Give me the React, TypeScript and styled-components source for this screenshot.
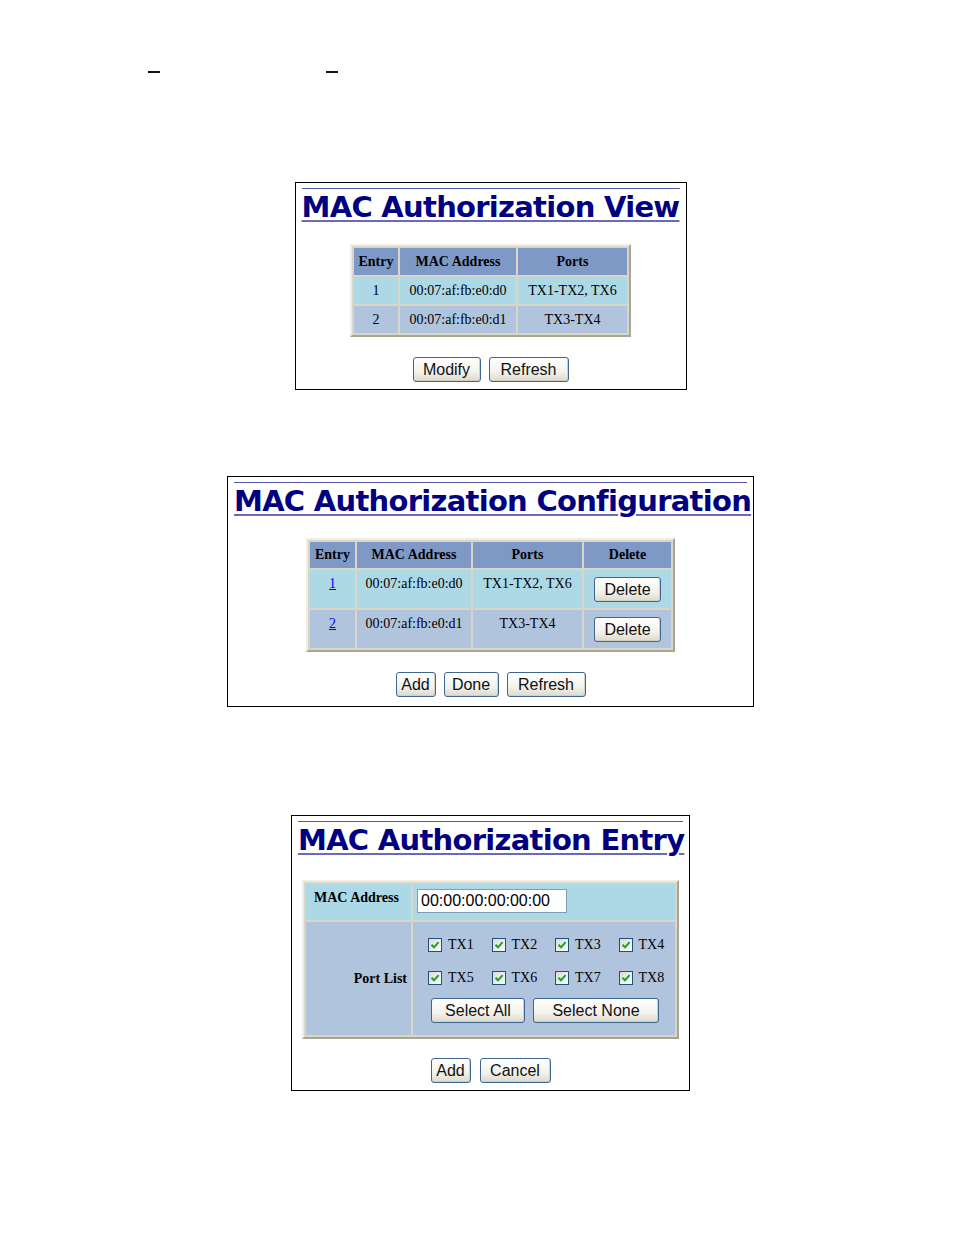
import React from "react";
import styled, { createGlobalStyle } from "styled-components";

const Global = createGlobalStyle`
  html, body { margin: 0; padding: 0; background: #fff; }
  body { font-family: "Liberation Serif", "Times New Roman", serif; color: #000; }
`;

const Page = styled.div`
  width: 954px;
  min-height: 1235px;
  box-sizing: border-box;
  padding: 71px 0 0 148px;
`;

const Column = styled.div`
  width: 685px;
  display: flex;
  flex-direction: column;
  align-items: center;
`;

const DashRow = styled.div`
  align-self: stretch;
  display: flex;
  height: 2px;
`;

const Dash = styled.span<{ $ml: number }>`
  display: block;
  width: 12px;
  height: 2px;
  background: #111;
  margin-left: ${(p) => p.$ml}px;
`;

const Panel = styled.section<{ $w: number; $mt: number; $pb: number }>`
  width: ${(p) => p.$w}px;
  margin-top: ${(p) => p.$mt}px;
  box-sizing: border-box;
  border: 1px solid #000;
  padding: 5px 6px ${(p) => p.$pb}px;
  display: flex;
  flex-direction: column;
  align-items: center;
`;

const Title = styled.h1`
  align-self: stretch;
  margin: 0;
  border-top: 1px solid #5656a8;
  font-family: "DejaVu Sans", Verdana, sans-serif;
  font-weight: bold;
  font-size: 29px;
  letter-spacing: -0.72px;
  line-height: 36px;
  height: 36px;
  color: #000080;
  text-align: center;
  white-space: nowrap;
  text-decoration: underline;
  text-decoration-color: #6a6ab8;
  text-decoration-thickness: 2px;
  text-underline-offset: 3px;
`;

const Grid = styled.table<{ $mt: number }>`
  margin-top: ${(p) => p.$mt}px;
  border-collapse: separate;
  border-spacing: 2px;
  background: #dad6c7;
  border: 2px solid;
  border-color: #efede4 #a9a596 #a9a596 #efede4;
  font-size: 14px;
  table-layout: fixed;
`;

const Col = styled.col<{ $w: number }>`
  width: ${(p) => p.$w}px;
`;

const Head = styled.th<{ $h: number }>`
  background: #7f99c7;
  height: ${(p) => p.$h}px;
  padding: 0;
  font-weight: bold;
  text-align: center;
  vertical-align: middle;
  white-space: nowrap;
`;

const Cell = styled.td<{ $h: number; $bg: string; $top?: boolean }>`
  background: ${(p) => p.$bg};
  height: ${(p) => p.$h}px;
  padding: ${(p) => (p.$top ? "6px 0 0" : "0")};
  box-sizing: border-box;
  text-align: center;
  vertical-align: ${(p) => (p.$top ? "top" : "middle")};
  white-space: nowrap;
`;

const EntryLink = styled.a`
  color: #0000ee;
  text-decoration: underline;
`;

const ButtonRow = styled.div<{ $mt: number; $gap: number }>`
  display: flex;
  gap: ${(p) => p.$gap}px;
  margin-top: ${(p) => p.$mt}px;
  justify-content: center;
`;

const Btn = styled.button<{ $w: number }>`
  width: ${(p) => p.$w}px;
  height: 25px;
  box-sizing: border-box;
  padding: 0;
  border: 1px solid #3f6690;
  border-radius: 3px;
  background: linear-gradient(#ffffff, #f3f2ec 60%, #dcd9cc);
  box-shadow: inset -1px -1px 0 #d3d0c2;
  font-family: "Liberation Sans", Arial, sans-serif;
  font-size: 16px;
  color: #111;
  line-height: 23px;
  cursor: pointer;
`;

const Label = styled.td<{ $h: number; $align: "left" | "right"; $valign: "top" | "middle" }>`
  background: ${(p) => (p.$valign === "top" ? "#add8e6" : "#b0c4de")};
  height: ${(p) => p.$h}px;
  box-sizing: border-box;
  padding: ${(p) => (p.$valign === "top" ? "6px 0 0 8px" : "0 4px 0 0")};
  font-weight: bold;
  text-align: ${(p) => p.$align};
  vertical-align: ${(p) => p.$valign};
  white-space: nowrap;
`;

const Field = styled.td<{ $bg: string; $pad: string }>`
  background: ${(p) => p.$bg};
  padding: ${(p) => p.$pad};
  box-sizing: border-box;
  vertical-align: top;
`;

const TextInput = styled.input`
  width: 150px;
  height: 24px;
  box-sizing: border-box;
  border: 1px solid #7f9db9;
  padding: 0 3px;
  font-family: "Liberation Sans", Arial, sans-serif;
  font-size: 16px;
  color: #000;
  background: #fff;
  outline: none;
`;

const PortGrid = styled.div`
  display: grid;
  grid-template-columns: 63.5px 63.5px 63.5px auto;
  grid-auto-rows: 33px;
`;

const Port = styled.label`
  display: flex;
  align-items: center;
  gap: 6px;
  font-size: 14px;
`;

const Box = styled.span`
  width: 14px;
  height: 14px;
  box-sizing: border-box;
  border: 1px solid #1c5180;
  background: linear-gradient(135deg, #dcdcd7, #fbfbf9);
  display: flex;
  align-items: center;
  justify-content: center;
`;

const SelectRow = styled.div`
  display: flex;
  gap: 8px;
  margin: 4px 0 0 3px;
`;

const Check = () => (
  <Box>
    <svg width="10" height="10" viewBox="0 0 10 10">
      <path d="M1.5 4.8 L4 7.3 L8.6 2.2" fill="none" stroke="#21a121" strokeWidth="2" />
    </svg>
  </Box>
);

const viewRows = [
  { n: "1", mac: "00:07:af:fb:e0:d0", ports: "TX1-TX2, TX6", bg: "#add8e6" },
  { n: "2", mac: "00:07:af:fb:e0:d1", ports: "TX3-TX4", bg: "#b0c4de" },
];

const ports = ["TX1", "TX2", "TX3", "TX4", "TX5", "TX6", "TX7", "TX8"];

export default function App() {
  return (
    <>
      <Global />
      <Page>
        <Column>
          <DashRow>
            <Dash $ml={0} />
            <Dash $ml={166} />
          </DashRow>

          <Panel $w={392} $mt={109} $pb={7}>
            <Title>MAC Authorization View</Title>
            <Grid $mt={19}>
              <colgroup>
                <Col $w={44} />
                <Col $w={116} />
                <Col $w={109} />
              </colgroup>
              <thead>
                <tr>
                  <Head $h={27}>Entry</Head>
                  <Head $h={27}>MAC Address</Head>
                  <Head $h={27}>Ports</Head>
                </tr>
              </thead>
              <tbody>
                {viewRows.map((r) => (
                  <tr key={r.n}>
                    <Cell $h={27} $bg={r.bg}>{r.n}</Cell>
                    <Cell $h={27} $bg={r.bg}>{r.mac}</Cell>
                    <Cell $h={27} $bg={r.bg}>{r.ports}</Cell>
                  </tr>
                ))}
              </tbody>
            </Grid>
            <ButtonRow $mt={20} $gap={8}>
              <Btn $w={68}>Modify</Btn>
              <Btn $w={80}>Refresh</Btn>
            </ButtonRow>
          </Panel>

          <Panel $w={527} $mt={86} $pb={9}>
            <Title>MAC Authorization Configuration</Title>
            <Grid $mt={19}>
              <colgroup>
                <Col $w={45} />
                <Col $w={114} />
                <Col $w={109} />
                <Col $w={87} />
              </colgroup>
              <thead>
                <tr>
                  <Head $h={26}>Entry</Head>
                  <Head $h={26}>MAC Address</Head>
                  <Head $h={26}>Ports</Head>
                  <Head $h={26}>Delete</Head>
                </tr>
              </thead>
              <tbody>
                {viewRows.map((r) => (
                  <tr key={r.n}>
                    <Cell $h={38} $bg={r.bg} $top>
                      <EntryLink href="#">{r.n}</EntryLink>
                    </Cell>
                    <Cell $h={38} $bg={r.bg} $top>{r.mac}</Cell>
                    <Cell $h={38} $bg={r.bg} $top>{r.ports}</Cell>
                    <Cell $h={38} $bg={r.bg}>
                      <Btn $w={67}>Delete</Btn>
                    </Cell>
                  </tr>
                ))}
              </tbody>
            </Grid>
            <ButtonRow $mt={20} $gap={8}>
              <Btn $w={40}>Add</Btn>
              <Btn $w={55}>Done</Btn>
              <Btn $w={79}>Refresh</Btn>
            </ButtonRow>
          </Panel>

          <Panel $w={399} $mt={108} $pb={7}>
            <Title>MAC Authorization Entry</Title>
            <Grid $mt={22}>
              <colgroup>
                <Col $w={105} />
                <Col $w={262} />
              </colgroup>
              <tbody>
                <tr>
                  <Label $h={36} $align="left" $valign="top">MAC Address</Label>
                  <Field $bg="#add8e6" $pad="5px 0 0 4px">
                    <TextInput defaultValue="00:00:00:00:00:00" />
                  </Field>
                </tr>
                <tr>
                  <Label $h={113} $align="right" $valign="middle">Port List</Label>
                  <Field $bg="#b0c4de" $pad="6px 0 0 15px">
                    <PortGrid>
                      {ports.map((p) => (
                        <Port key={p}>
                          <Check />
                          {p}
                        </Port>
                      ))}
                    </PortGrid>
                    <SelectRow>
                      <Btn $w={94}>Select All</Btn>
                      <Btn $w={126}>Select None</Btn>
                    </SelectRow>
                  </Field>
                </tr>
              </tbody>
            </Grid>
            <ButtonRow $mt={19} $gap={9}>
              <Btn $w={40}>Add</Btn>
              <Btn $w={71}>Cancel</Btn>
            </ButtonRow>
          </Panel>
        </Column>
      </Page>
    </>
  );
}
